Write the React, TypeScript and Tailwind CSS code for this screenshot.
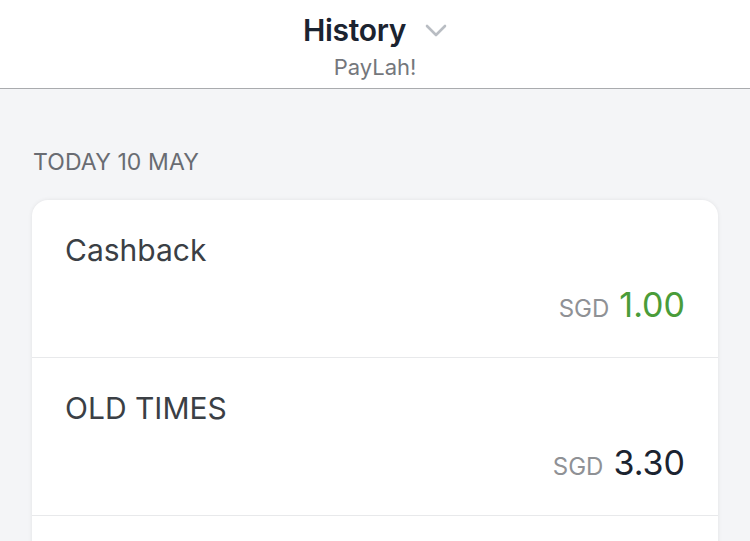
const rows = [
  { name: "Cashback", amount: "1.00", credit: true },
  { name: "OLD TIMES", amount: "3.30", credit: false },
  { name: "", amount: "", credit: false },
];

export default function App() {
  return (
    <div className="h-[541px] overflow-hidden bg-[#f4f5f7] font-['Inter',sans-serif]">
      {/* Header */}
      <header className="h-[89px] bg-white border-b border-[#a9abae] flex flex-col items-center">
        <div className="mt-[12px] flex items-center">
          <h1 className="text-[30px] leading-[36px] font-semibold text-[#1b2330] tracking-[-0.3px]">History</h1>
          <svg className="ml-[19px] mt-[2px] w-[22px] h-[14px]" viewBox="0 0 22 14" fill="none" stroke="#b9bdc3" strokeWidth={2.6} strokeLinecap="round" strokeLinejoin="round">
            <path d="M2 2l9 9 9-9" />
          </svg>
        </div>
        <p className="mt-[6px] text-[22px] leading-[26px] text-[#74777c]">PayLah!</p>
      </header>

      <main className="px-[32px]">
        <h2 className="pt-[59px] pl-[1px] text-[23px] leading-[28px] text-[#696c72] tracking-[0.1px]">TODAY 10 MAY</h2>

        <div className="mt-[24px] bg-white rounded-t-[16px] shadow-[0_0_4px_rgba(0,0,0,0.08)]">
          {rows.map((r, i) => (
            <div key={i} className="h-[158px] border-b border-[#e8e9eb] px-[33px] pt-[32px]">
              <div className="text-[30px] leading-[36px] text-[#3b3f45]">{r.name}</div>
              {r.amount && (
                <div className="mt-[18px] flex items-baseline justify-end">
                  <span className="text-[24px] text-[#8f9195] mr-[10px]">SGD</span>
                  <span className={r.credit ? "text-[34px] leading-[38px] text-[#4a9c39]" : "text-[34px] leading-[38px] text-[#1b2330]"}>
                    {r.amount}
                  </span>
                </div>
              )}
            </div>
          ))}
        </div>
      </main>
    </div>
  );
}
